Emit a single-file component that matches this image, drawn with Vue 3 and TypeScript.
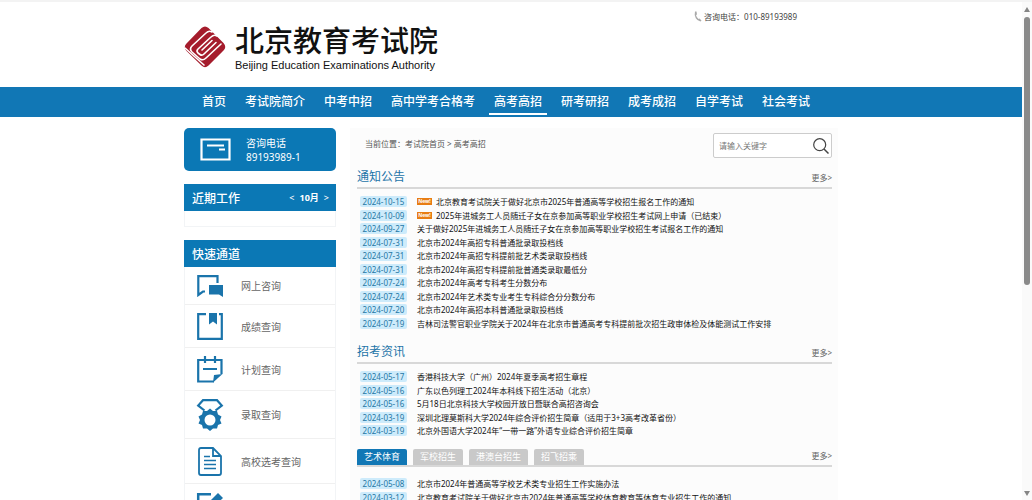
<script setup lang="ts">
interface Notice {
  date: string
  title: string
  isNew?: boolean
}

interface QuickLink {
  icon: string
  label: string
}

const navItems: string[] = [
  '首页', '考试院简介', '中考中招', '高中学考合格考', '高考高招',
  '研考研招', '成考成招', '自学考试', '社会考试',
]
const activeNav = '高考高招'

const quickLinks: QuickLink[] = [
  { icon: 'chat', label: '网上咨询' },
  { icon: 'book', label: '成绩查询' },
  { icon: 'plan', label: '计划查询' },
  { icon: 'medal', label: '录取查询' },
  { icon: 'doc', label: '高校选考查询' },
  { icon: 'edit', label: '录取统计查询' },
]

const notices: Notice[] = [
  { date: '2024-10-15', title: '北京教育考试院关于做好北京市2025年普通高等学校招生报名工作的通知', isNew: true },
  { date: '2024-10-09', title: '2025年进城务工人员随迁子女在京参加高等职业学校招生考试网上申请（已结束）', isNew: true },
  { date: '2024-09-27', title: '关于做好2025年进城务工人员随迁子女在京参加高等职业学校招生考试报名工作的通知' },
  { date: '2024-07-31', title: '北京市2024年高招专科普通批录取投档线' },
  { date: '2024-07-31', title: '北京市2024年高招专科提前批艺术类录取投档线' },
  { date: '2024-07-31', title: '北京市2024年高招专科提前批普通类录取最低分' },
  { date: '2024-07-24', title: '北京市2024年高考专科考生分数分布' },
  { date: '2024-07-24', title: '北京市2024年艺术类专业考生专科综合分分数分布' },
  { date: '2024-07-20', title: '北京市2024年高招本科普通批录取投档线' },
  { date: '2024-07-19', title: '吉林司法警官职业学院关于2024年在北京市普通高考专科提前批次招生政审体检及体能测试工作安排' },
]

const news: Notice[] = [
  { date: '2024-05-17', title: '香港科技大学（广州）2024年夏季高考招生章程' },
  { date: '2024-05-16', title: '广东以色列理工2024年本科线下招生活动（北京）' },
  { date: '2024-05-16', title: '5月18日北京科技大学校园开放日暨联合高招咨询会' },
  { date: '2024-03-19', title: '深圳北理莫斯科大学2024年综合评价招生简章（适用于3+3高考改革省份）' },
  { date: '2024-03-19', title: '北京外国语大学2024年“一带一路”外语专业综合评价招生简章' },
]

const tabs: string[] = ['艺术体育', '军校招生', '港澳台招生', '招飞招乘']
const activeTab = '艺术体育'

const tabNotices: Notice[] = [
  { date: '2024-05-08', title: '北京市2024年普通高等学校艺术类专业招生工作实施办法' },
  { date: '2024-03-12', title: '北京教育考试院关于做好北京市2024年普通高等学校体育教育等体育专业招生工作的通知' },
]

const sections = [
  { title: '通知公告', items: notices },
  { title: '招考资讯', items: news },
]
</script>

<template>
  <div class="window">
    <div class="page">
      <header class="header wrap">
        <a class="brand" href="#">
          <svg class="emblem" viewBox="0 0 42 42" aria-hidden="true">
            <path d="M17.500 2Q21 -1 24.500 2L39.500 17Q43 21 39.500 24.500L24.500 39.500Q21 43 17.500 39.500L2.500 25Q-1 21 2.500 17.500Z" fill="#a51c2c" />
            <g fill="none" stroke="#fff" stroke-width="1.600" stroke-linecap="round" stroke-linejoin="round">
              <path d="M1 22L20 39" />
              <path d="M28 6Q25 4 22 7L8 20Q5 23 8 26L16 33Q19 35 22 32L37 18" />
              <path d="M33 10Q30 8 27 11L14 23Q12 25 14 27L16 28.500Q18 30 20 28L32 16.500" />
              <path d="M28 14.500L18 24" />
            </g>
          </svg>
          <span class="brand-text">
            <span class="brand-cn">北京教育考试院</span>
            <span class="brand-en">Beijing Education Examinations Authority</span>
          </span>
        </a>
        <p class="hotline">
          <svg viewBox="0 0 8 11" aria-hidden="true">
            <path d="M1 .5 2.500 .5 3 3.500 2 4Q2.500 6.500 4.500 8L5.500 7.500 7.500 9.500 6.500 10.500Q3.500 10 1.800 7.200Q0 4 1 .5Z" fill="#aaa" />
          </svg>
          咨询电话：010-89193989
        </p>
      </header>

      <nav class="nav">
        <div class="nav-list wrap">
          <a v-for="item in navItems" :key="item" href="#" :class="{ active: item === activeNav }">{{ item }}</a>
        </div>
      </nav>

      <div class="columns wrap">
        <aside class="side">
          <div class="phone-card">
            <svg viewBox="0 0 31 23" aria-hidden="true">
              <path d="M1.500 1.500H29.500V21.500H1.500Z" fill="none" stroke="#fff" stroke-width="2.200" />
              <path d="M7 7.500H24M19 11.500H25" fill="none" stroke="#fff" stroke-width="2.200" />
            </svg>
            <p>咨询电话<br>89193989-1</p>
          </div>

          <section class="box">
            <h2>
              近期工作
              <span class="month">
                <button type="button" aria-label="上个月">&lt;</button>
                <b>10月</b>
                <button type="button" aria-label="下个月">&gt;</button>
              </span>
            </h2>
            <div class="recent-body"></div>
          </section>

          <section class="box">
            <h2>快速通道</h2>
            <ul class="quick">
              <li v-for="link in quickLinks" :key="link.label">
                <a href="#">
                  <svg v-if="link.icon === 'chat'" class="h22" viewBox="0 0 28 22" aria-hidden="true">
                    <path d="M9 16.500H7L2.300 20V1.200H21.500V8" fill="none" stroke="#1a74ab" stroke-width="2.200" />
                    <path d="M13 10H27V22L23 19.500H13Z" fill="#1a74ab" />
                  </svg>
                  <svg v-else-if="link.icon === 'book'" class="h27" viewBox="0 0 28 27" aria-hidden="true">
                    <path d="M10 1.200H2.200V25.800H25.800V1.200H23" fill="none" stroke="#1a74ab" stroke-width="2.200" />
                    <path d="M13 0H21V11.500L17 8.500L13 11.500Z" fill="#1a74ab" />
                  </svg>
                  <svg v-else-if="link.icon === 'plan'" class="h27" viewBox="0 0 28 27" aria-hidden="true">
                    <path d="M18 25.500H2.200V4H25.500V18" fill="none" stroke="#1a74ab" stroke-width="2.200" />
                    <path d="M9 0V7M19 0V7M7 13H21" fill="none" stroke="#1a74ab" stroke-width="2.200" />
                    <path d="M17 26.500L18 19L26.500 18Z" fill="#1a74ab" />
                  </svg>
                  <svg v-else-if="link.icon === 'medal'" class="h32" viewBox="0 0 28 32" aria-hidden="true">
                    <path d="M8.500 11.500L2.200 6.500L7 1.200H21L25.800 6.500L19.500 11.500" fill="none" stroke="#1a74ab" stroke-width="2.200" />
                    <path d="M14 9.500L17 12L21 12L22 15.500L25.500 17.500L24 21L25.500 24.500L22 26L21 29.500L17 29.500L14 32L11 29.500L7 29.500L6 26L2.500 24.500L4 21L2.500 17.500L6 15.500L7 12L11 12Z" fill="#1a74ab" />
                    <circle cx="14" cy="21" r="5.500" fill="#fff" />
                  </svg>
                  <svg v-else-if="link.icon === 'doc'" class="h29" viewBox="0 0 28 29" aria-hidden="true">
                    <path d="M5 1H17L25 9V26Q25 28 23 28H5Q3 28 3 26V3Q3 1 5 1ZM17 1V9H25" fill="none" stroke="#1a74ab" stroke-width="1.800" />
                    <path d="M8 9.500H14M8 13.500H20M8 17.500H20M8 21.500H20" fill="none" stroke="#1a74ab" stroke-width="1.500" />
                  </svg>
                  <svg v-else class="h27" viewBox="0 0 28 27" aria-hidden="true">
                    <path d="M15 2.200H2.200V25H25V13" fill="none" stroke="#1a74ab" stroke-width="2.500" />
                    <path d="M22 1L27 6L14 18L9 19L10 13Z" fill="#1a74ab" />
                  </svg>
                  <span>{{ link.label }}</span>
                </a>
              </li>
            </ul>
          </section>
        </aside>

        <main class="main">
          <div class="topline">
            <p class="crumbs">当前位置：<a href="#">考试院首页</a> &gt; <a href="#">高考高招</a></p>
            <form class="search" @submit.prevent>
              <input type="text" placeholder="请输入关键字" aria-label="请输入关键字">
              <button type="submit" aria-label="搜索">
                <svg viewBox="0 0 16 16" aria-hidden="true">
                  <circle cx="6.700" cy="6.700" r="6" fill="none" stroke="#444" stroke-width="1.200" />
                  <path d="M11 11L15.500 15.500" stroke="#444" stroke-width="1.500" />
                </svg>
              </button>
            </form>
          </div>

          <section v-for="section in sections" :key="section.title">
            <div class="news-head">
              <h3>{{ section.title }}</h3>
              <a class="more" href="#">更多&gt;</a>
            </div>
            <ul class="list">
              <li v-for="item in section.items" :key="item.title">
                <time>{{ item.date }}</time>
                <span v-if="item.isNew" class="new">New!</span>
                <a href="#">{{ item.title }}</a>
              </li>
            </ul>
          </section>

          <section class="tabbed">
            <div class="news-head">
              <div class="tabs" role="tablist">
                <button
                  v-for="tab in tabs"
                  :key="tab"
                  type="button"
                  role="tab"
                  :aria-selected="tab === activeTab"
                  :class="{ active: tab === activeTab }"
                >{{ tab }}</button>
              </div>
              <a class="more" href="#">更多&gt;</a>
            </div>
            <ul class="list">
              <li v-for="item in tabNotices" :key="item.title">
                <time>{{ item.date }}</time>
                <a href="#">{{ item.title }}</a>
              </li>
            </ul>
          </section>
        </main>
      </div>
    </div>

    <div class="scrollbar" aria-hidden="true">
      <svg viewBox="0 0 8 6"><path d="M4 0L7 5H1Z" fill="#858585" /></svg>
      <div class="track"><div class="thumb"></div></div>
      <svg viewBox="0 0 8 6"><path d="M1 0H7L4 5Z" fill="#858585" /></svg>
    </div>
  </div>
</template>

<style>
body {
  margin: 0;
  background: #fff;
}
</style>

<style scoped>
.window {
  display: grid;
  grid-template-columns: minmax(0, 1fr) 10px;
  height: 100vh;
  box-sizing: border-box;
  border-top: 2px solid #f3f3f3;
  overflow: hidden;
  font-family: "Noto Sans", "Noto Sans CJK SC", sans-serif;
  font-size: 8px;
  color: #111;
}
.window * {
  box-sizing: border-box;
}
.page {
  overflow: hidden;
}
.wrap {
  width: 64%;
  min-width: 654px;
  margin: 0 auto;
}
a {
  color: inherit;
  text-decoration: none;
}
p, h2, h3, ul {
  margin: 0;
  padding: 0;
  font-weight: 400;
}
ul {
  list-style: none;
}
button {
  border: 0;
  padding: 0;
  background: none;
  font: inherit;
  color: inherit;
}

.header {
  display: flex;
  justify-content: space-between;
  height: 85px;
  padding-right: 41px;
}
.brand {
  display: flex;
  gap: 9px;
  padding-top: 18px;
}
.emblem {
  width: 42px;
  height: 42px;
  margin-top: 6px;
}
.brand-text {
  display: flex;
  flex-direction: column;
}
.brand-cn {
  font-family: "Noto Sans CJK SC", sans-serif;
  font-size: 29px;
  font-weight: 500;
  line-height: 38px;
  color: #111;
}
.brand-en {
  font-family: "Liberation Sans", Arial, sans-serif;
  font-size: 11px;
  line-height: 14px;
  color: #111;
}
.hotline {
  display: flex;
  align-items: center;
  gap: 2px;
  height: 12px;
  margin-top: 8px;
  color: #444;
}
.hotline svg {
  width: 8px;
  height: 11px;
}

.nav {
  background: #1177b5;
}
.nav-list {
  display: flex;
  gap: 9px;
  padding-left: 13px;
  height: 30px;
}
.nav a {
  height: 28px;
  padding: 0 5px;
  font-size: 12px;
  font-weight: 500;
  line-height: 29px;
  color: #fff;
  white-space: nowrap;
}
.nav a.active {
  border-bottom: 2px solid #fff;
}

.columns {
  display: flex;
  align-items: flex-start;
  gap: 14px;
  padding-top: 11px;
}
.side {
  flex: none;
  width: 152px;
}
.phone-card {
  display: flex;
  align-items: center;
  gap: 15px;
  height: 43px;
  padding-left: 16px;
  border-radius: 5px;
  background: #0b78b5;
  color: #fff;
  font-size: 10px;
  line-height: 14px;
}
.phone-card svg {
  width: 31px;
  height: 23px;
}
.box {
  margin-top: 13px;
}
.box h2 {
  display: flex;
  align-items: center;
  justify-content: space-between;
  height: 27px;
  padding: 0 7px 0 8px;
  background: #0b78b5;
  color: #fff;
  font-size: 12px;
  font-weight: 500;
}
.month {
  display: flex;
  align-items: center;
  gap: 5px;
  font-size: 9px;
}
.recent-body {
  height: 16px;
  border: 1px solid #f2f4f6;
  border-top: 0;
}
.quick {
  border: 1px solid #f2f4f6;
  border-top: 0;
}
.quick li {
  border-bottom: 1px solid #f0f0f0;
}
.quick a {
  display: flex;
  align-items: center;
  gap: 17px;
  padding: 8px 0 7px 11px;
  font-size: 10px;
  line-height: 14px;
  color: #666;
}
.quick svg {
  width: 28px;
}
.h22 { height: 22px; }
.h27 { height: 27px; }
.h29 { height: 29px; }
.h32 { height: 32px; }

.main {
  flex: 1;
  min-width: 0;
  padding: 5px 6px 0 7px;
  background: #fcfcfc;
}
.topline {
  display: flex;
  justify-content: space-between;
  height: 25px;
}
.crumbs {
  padding-left: 8px;
  line-height: 22px;
  color: #555;
}
.search {
  display: flex;
  align-items: center;
  width: 119px;
  height: 25px;
  padding: 0 2px 0 5px;
  border: 1px solid #ccc;
  border-radius: 2px;
  background: #fff;
}
.search input {
  flex: 1;
  min-width: 0;
  border: 0;
  padding: 0;
  outline: 0;
  background: none;
  font: inherit;
}
.search input::placeholder {
  color: #777;
}
.search svg {
  display: block;
  width: 16px;
  height: 16px;
}

.news-head {
  display: flex;
  align-items: flex-end;
  justify-content: space-between;
  height: 31px;
  border-bottom: 2px solid #d8d8d8;
}
.news-head h3 {
  font-size: 12px;
  line-height: 20px;
  color: #1c74a8;
}
.more {
  line-height: 18px;
  color: #666;
}
.list {
  display: grid;
  grid-auto-rows: 13px 14px;
  padding: 6px 0 3px 3px;
}
.list li {
  display: flex;
  align-items: center;
  white-space: nowrap;
}
.list time {
  width: 47px;
  margin-right: 10px;
  border-radius: 2px;
  background: #cdebfb;
  line-height: 11px;
  text-align: center;
  color: #2578a5;
}
.new {
  width: 15px;
  margin-right: 4px;
  background: #e87d14;
  font-size: 5px;
  font-weight: 700;
  line-height: 7px;
  text-align: center;
  color: #fff;
}
.tabbed .news-head {
  height: 27px;
}
.tabbed .list {
  padding-top: 10px;
}
.tabs {
  display: flex;
  gap: 6px;
}
.tabs button {
  height: 16px;
  padding: 0 7px;
  border-radius: 2px 2px 0 0;
  background: #c9c9c9;
  font-size: 9px;
  line-height: 16px;
  color: #fff;
}
.tabs button.active {
  background: #1177b5;
}

.scrollbar {
  display: flex;
  flex-direction: column;
  align-items: center;
  gap: 4px;
  padding: 5px 0 3px;
  background: #fafafa;
}
.scrollbar svg {
  width: 8px;
  height: 6px;
}
.track {
  flex: 1;
  width: 6px;
}
.thumb {
  height: 57%;
  border-radius: 3px;
  background: #8a8a8a;
}
</style>
